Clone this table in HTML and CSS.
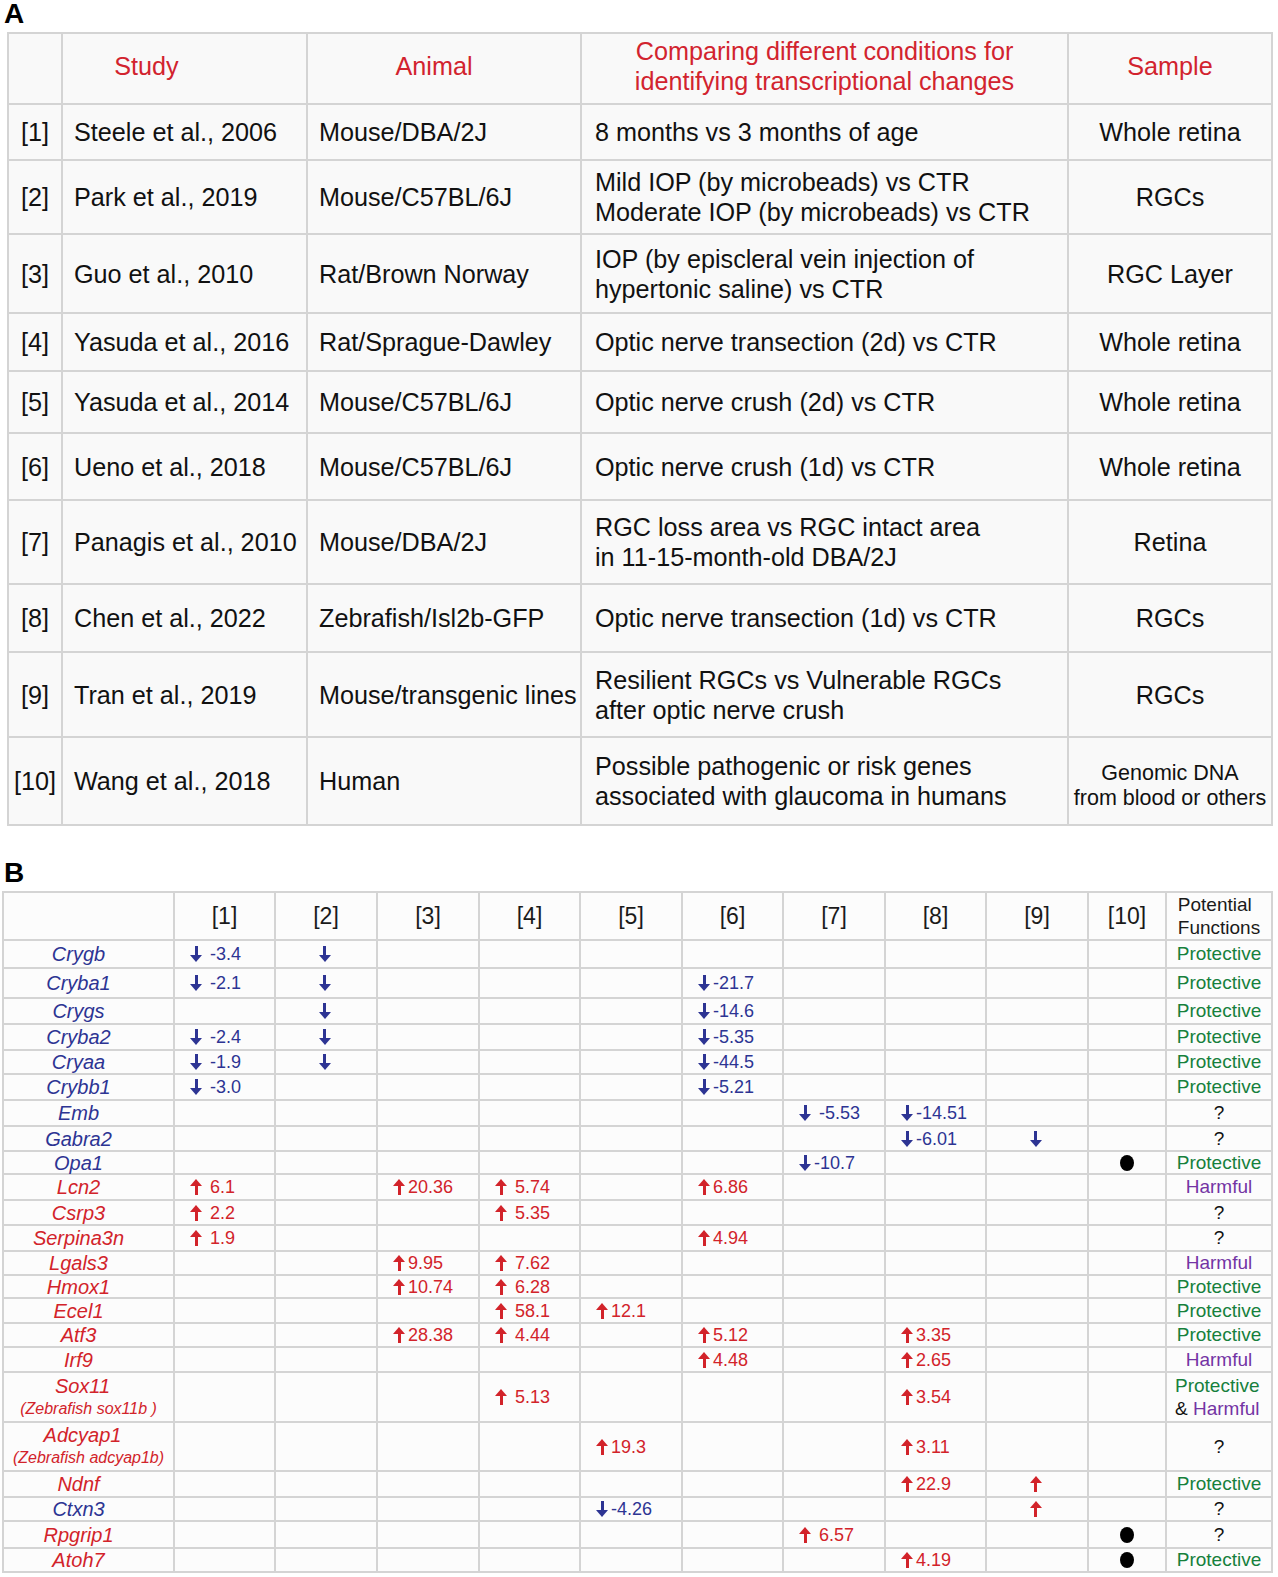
FILE: index.html
```html
<!DOCTYPE html>
<html>
<head>
<meta charset="utf-8">
<link rel="stylesheet" href="styles.css">
</head>
<body>
<div class="lab lab-a">A</div>
<div class="grid ta">
  <div></div><div class="hd ce h-study">Study</div><div class="hd ce h-animal">Animal</div><div class="hd ce">Comparing different conditions for<br>identifying transcriptional changes</div><div class="hd ce">Sample</div>
  <div class="ce">[1]</div><div class="pl">Steele et al., 2006</div><div class="pl">Mouse/DBA/2J</div><div class="pc">8 months vs 3 months of age</div><div class="ce">Whole retina</div>
  <div class="ce">[2]</div><div class="pl">Park et al., 2019</div><div class="pl">Mouse/C57BL/6J</div><div class="pc">Mild IOP (by microbeads) vs CTR<br>Moderate IOP (by microbeads) vs CTR</div><div class="ce">RGCs</div>
  <div class="ce">[3]</div><div class="pl">Guo et al., 2010</div><div class="pl">Rat/Brown Norway</div><div class="pc">IOP (by episcleral vein injection of<br>hypertonic saline) vs CTR</div><div class="ce">RGC Layer</div>
  <div class="ce">[4]</div><div class="pl">Yasuda et al., 2016</div><div class="pl">Rat/Sprague-Dawley</div><div class="pc">Optic nerve transection (2d) vs CTR</div><div class="ce">Whole retina</div>
  <div class="ce">[5]</div><div class="pl">Yasuda et al., 2014</div><div class="pl">Mouse/C57BL/6J</div><div class="pc">Optic nerve crush (2d) vs CTR</div><div class="ce">Whole retina</div>
  <div class="ce">[6]</div><div class="pl">Ueno et al., 2018</div><div class="pl">Mouse/C57BL/6J</div><div class="pc">Optic nerve crush (1d) vs CTR</div><div class="ce">Whole retina</div>
  <div class="ce">[7]</div><div class="pl">Panagis et al., 2010</div><div class="pl">Mouse/DBA/2J</div><div class="pc">RGC loss area vs RGC intact area<br>in 11-15-month-old DBA/2J</div><div class="ce">Retina</div>
  <div class="ce">[8]</div><div class="pl">Chen et al., 2022</div><div class="pl">Zebrafish/Isl2b-GFP</div><div class="pc">Optic nerve transection (1d) vs CTR</div><div class="ce">RGCs</div>
  <div class="ce">[9]</div><div class="pl">Tran et al., 2019</div><div class="pl">Mouse/transgenic lines</div><div class="pc">Resilient RGCs vs Vulnerable RGCs<br>after optic nerve crush</div><div class="ce">RGCs</div>
  <div class="ce">[10]</div><div class="pl">Wang et al., 2018</div><div class="pl">Human</div><div class="pc">Possible pathogenic or risk genes<br>associated with glaucoma in humans</div><div class="ce small">Genomic DNA<br>from blood or others</div>
</div>

<div class="lab lab-b">B</div>
<div class="grid tb">
  <div></div><div class="hb">[1]</div><div class="hb">[2]</div><div class="hb">[3]</div><div class="hb">[4]</div><div class="hb">[5]</div><div class="hb">[6]</div><div class="hb">[7]</div><div class="hb">[8]</div><div class="hb">[9]</div><div class="hb">[10]</div><div class="hf">Potential<br>Functions</div>

  <div class="g b">Crygb</div><div class="v b"><i class="ad sp"></i>-3.4</div><div class="c b"><i class="ad"></i></div><div></div><div></div><div></div><div></div><div></div><div></div><div></div><div></div><div class="f pro">Protective</div>
  <div class="g b">Cryba1</div><div class="v b"><i class="ad sp"></i>-2.1</div><div class="c b"><i class="ad"></i></div><div></div><div></div><div></div><div class="v b"><i class="ad"></i>-21.7</div><div></div><div></div><div></div><div></div><div class="f pro">Protective</div>
  <div class="g b">Crygs</div><div></div><div class="c b"><i class="ad"></i></div><div></div><div></div><div></div><div class="v b"><i class="ad"></i>-14.6</div><div></div><div></div><div></div><div></div><div class="f pro">Protective</div>
  <div class="g b">Cryba2</div><div class="v b"><i class="ad sp"></i>-2.4</div><div class="c b"><i class="ad"></i></div><div></div><div></div><div></div><div class="v b"><i class="ad"></i>-5.35</div><div></div><div></div><div></div><div></div><div class="f pro">Protective</div>
  <div class="g b">Cryaa</div><div class="v b"><i class="ad sp"></i>-1.9</div><div class="c b"><i class="ad"></i></div><div></div><div></div><div></div><div class="v b"><i class="ad"></i>-44.5</div><div></div><div></div><div></div><div></div><div class="f pro">Protective</div>
  <div class="g b">Crybb1</div><div class="v b"><i class="ad sp"></i>-3.0</div><div></div><div></div><div></div><div></div><div class="v b"><i class="ad"></i>-5.21</div><div></div><div></div><div></div><div></div><div class="f pro">Protective</div>
  <div class="g b">Emb</div><div></div><div></div><div></div><div></div><div></div><div></div><div class="v b"><i class="ad sp"></i>-5.53</div><div class="v b"><i class="ad"></i>-14.51</div><div></div><div></div><div class="f">?</div>
  <div class="g b">Gabra2</div><div></div><div></div><div></div><div></div><div></div><div></div><div></div><div class="v b"><i class="ad"></i>-6.01</div><div class="c b"><i class="ad"></i></div><div></div><div class="f">?</div>
  <div class="g b">Opa1</div><div></div><div></div><div></div><div></div><div></div><div></div><div class="v b"><i class="ad"></i>-10.7</div><div></div><div></div><div class="c"><i class="dot"></i></div><div class="f pro">Protective</div>
  <div class="g r">Lcn2</div><div class="v r"><i class="au sp"></i>6.1</div><div></div><div class="v r"><i class="au"></i>20.36</div><div class="v r"><i class="au sp"></i>5.74</div><div></div><div class="v r"><i class="au"></i>6.86</div><div></div><div></div><div></div><div></div><div class="f harm">Harmful</div>
  <div class="g r">Csrp3</div><div class="v r"><i class="au sp"></i>2.2</div><div></div><div></div><div class="v r"><i class="au sp"></i>5.35</div><div></div><div></div><div></div><div></div><div></div><div></div><div class="f">?</div>
  <div class="g r">Serpina3n</div><div class="v r"><i class="au sp"></i>1.9</div><div></div><div></div><div></div><div></div><div class="v r"><i class="au"></i>4.94</div><div></div><div></div><div></div><div></div><div class="f">?</div>
  <div class="g r">Lgals3</div><div></div><div></div><div class="v r"><i class="au"></i>9.95</div><div class="v r"><i class="au sp"></i>7.62</div><div></div><div></div><div></div><div></div><div></div><div></div><div class="f harm">Harmful</div>
  <div class="g r">Hmox1</div><div></div><div></div><div class="v r"><i class="au"></i>10.74</div><div class="v r"><i class="au sp"></i>6.28</div><div></div><div></div><div></div><div></div><div></div><div></div><div class="f pro">Protective</div>
  <div class="g r">Ecel1</div><div></div><div></div><div></div><div class="v r"><i class="au sp"></i>58.1</div><div class="v r"><i class="au"></i>12.1</div><div></div><div></div><div></div><div></div><div></div><div class="f pro">Protective</div>
  <div class="g r">Atf3</div><div></div><div></div><div class="v r"><i class="au"></i>28.38</div><div class="v r"><i class="au sp"></i>4.44</div><div></div><div class="v r"><i class="au"></i>5.12</div><div></div><div class="v r"><i class="au"></i>3.35</div><div></div><div></div><div class="f pro">Protective</div>
  <div class="g r">Irf9</div><div></div><div></div><div></div><div></div><div></div><div class="v r"><i class="au"></i>4.48</div><div></div><div class="v r"><i class="au"></i>2.65</div><div></div><div></div><div class="f harm">Harmful</div>
  <div class="g r two"><span class="nm">Sox11</span><span class="zf">(Zebrafish sox11b )</span></div><div></div><div></div><div></div><div class="v r"><i class="au sp"></i>5.13</div><div></div><div></div><div></div><div class="v r"><i class="au"></i>3.54</div><div></div><div></div><div class="f two"><span class="pro">Protective</span><span>&amp; <span class="harm">Harmful</span></span></div>
  <div class="g r two"><span class="nm">Adcyap1</span><span class="zf">(Zebrafish adcyap1b)</span></div><div></div><div></div><div></div><div></div><div class="v r"><i class="au"></i>19.3</div><div></div><div></div><div class="v r"><i class="au"></i>3.11</div><div></div><div></div><div class="f">?</div>
  <div class="g r">Ndnf</div><div></div><div></div><div></div><div></div><div></div><div></div><div></div><div class="v r"><i class="au"></i>22.9</div><div class="c r"><i class="au"></i></div><div></div><div class="f pro">Protective</div>
  <div class="g b">Ctxn3</div><div></div><div></div><div></div><div></div><div class="v b"><i class="ad"></i>-4.26</div><div></div><div></div><div></div><div class="c r"><i class="au"></i></div><div></div><div class="f">?</div>
  <div class="g r">Rpgrip1</div><div></div><div></div><div></div><div></div><div></div><div></div><div class="v r"><i class="au sp"></i>6.57</div><div></div><div></div><div class="c"><i class="dot"></i></div><div class="f">?</div>
  <div class="g r">Atoh7</div><div></div><div></div><div></div><div></div><div></div><div></div><div></div><div class="v r"><i class="au"></i>4.19</div><div></div><div class="c"><i class="dot"></i></div><div class="f pro">Protective</div>
</div>
</body>
</html>
```
FILE: styles.css
```css
html, body {
  margin: 0;
  padding: 0;
  background: #ffffff;
}
body {
  width: 1278px;
  font-family: "Liberation Sans", Arial, sans-serif;
  color: #111111;
}
.lab {
  font-weight: bold;
  font-size: 28px;
  line-height: 28px;
  height: 32px;
  padding-left: 4px;
  color: #000;
}
.lab-b {
  margin-top: 33px;
}
.grid {
  display: grid;
  gap: 2px;
  padding: 2px;
  background: #d4d4d4;
  width: max-content;
}
.ta {
  margin-left: 7px;
  grid-template-columns: 52px 243px 272px 485px 202px;
  grid-template-rows: 69px 54px 72px 77px 56px 60px 65px 82px 66px 83px 86px;
  font-size: 25.2px;
  line-height: 30px;
}
.ta > div {
  background: #f9f9f9;
  display: flex;
  align-items: center;
  white-space: nowrap;
}
.ta .ce {
  justify-content: center;
  text-align: center;
}
.ta .pl {
  padding-left: 11px;
}
.ta .pc {
  padding-left: 13px;
}
.ta .hd {
  color: #d2232e;
  padding-bottom: 6px;
}
.ta .h-study {
  padding-right: 76px;
}
.ta .h-animal {
  padding-right: 20px;
}
.ta .small {
  font-size: 21.5px;
  line-height: 25px;
  padding-top: 9px;
}

.tb {
  margin-left: 2px;
  grid-template-columns: 169px 99px 100px 100px 99px 100px 99px 100px 99px 100px 76px 104px;
  grid-template-rows: 46px 26px 28px 24px 24px 22px 24px 24px 23px 21px 24px 23px 24px 22px 21px 23px 22px 23px 48px 47px 24px 22px 25px 22px;
  font-size: 18px;
  line-height: 20px;
}
.tb > div {
  background: #fcfcfc;
  display: flex;
  align-items: center;
  white-space: nowrap;
}
.tb .hb {
  justify-content: center;
  font-size: 23px;
  color: #1a1a1a;
}
.tb .hf {
  justify-content: center;
  text-align: left;
  font-size: 19px;
  line-height: 23px;
  color: #1a1a1a;
}
.tb .g {
  justify-content: center;
  font-style: italic;
  font-size: 20px;
  padding-right: 20px;
}
.tb .two {
  flex-direction: column;
  justify-content: center;
  line-height: 23px;
}
.tb .g.two {
  padding-right: 0;
}
.tb .g.two .nm {
  margin-right: 12px;
}
.tb .g.two .zf {
  font-size: 16px;
  line-height: 22px;
}
.tb .v {
  padding-left: 15px;
}
.tb .c {
  justify-content: center;
}
.tb .f {
  justify-content: center;
  font-size: 19px;
  color: #111;
}
.tb .f.two {
  align-items: flex-start;
  padding-left: 8px;
}
.b { color: #2d3493; }
.r { color: #d2232a; }
.pro { color: #16803c; }
.tb .f.pro { color: #16803c; }
.harm { color: #7434a4; }
.tb .f.harm { color: #7434a4; }

.ad, .au {
  display: inline-block;
  position: relative;
  width: 12px;
  height: 16px;
  margin-right: 3px;
  flex: none;
}
.sp {
  margin-right: 8px;
}
.ad::before, .au::before {
  content: "";
  position: absolute;
  left: 4.5px;
  width: 3px;
  height: 11px;
  background: currentColor;
}
.ad::before { top: 0; }
.au::before { bottom: 0; }
.ad::after, .au::after {
  content: "";
  position: absolute;
  left: 0;
  width: 0;
  height: 0;
  border-left: 6px solid transparent;
  border-right: 6px solid transparent;
}
.ad::after {
  bottom: 0;
  border-top: 7px solid currentColor;
}
.au::after {
  top: 0;
  border-bottom: 7px solid currentColor;
}
.dot {
  display: inline-block;
  width: 14px;
  height: 16px;
  border-radius: 50%;
  background: #000;
}
```
